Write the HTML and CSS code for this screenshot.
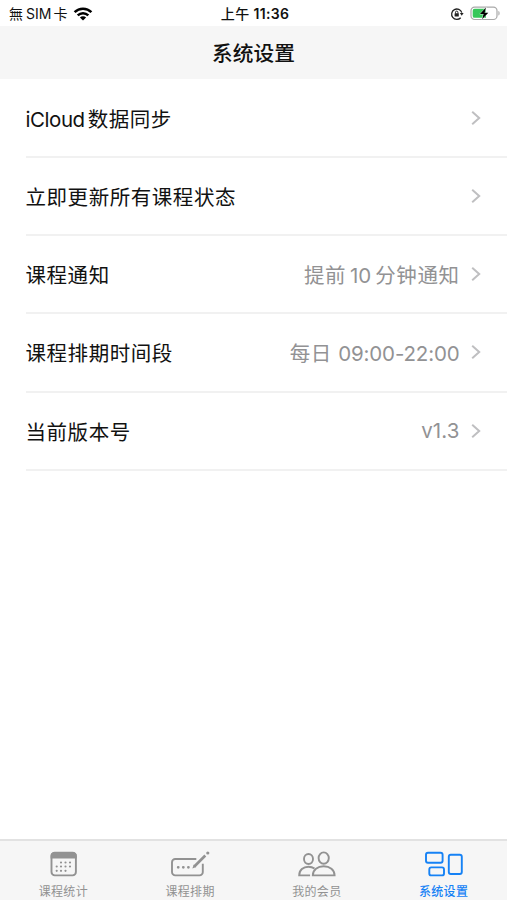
FILE: index.html
```html
<!DOCTYPE html>
<html lang="zh-CN">
<head>
    <meta charset="UTF-8">
    <meta name="viewport" content="width=device-width, initial-scale=1.0">
    <title>系统设置</title>
    <link rel="stylesheet" href="styles.css">
</head>
<body>
    <div class="status-bar">
        <div class="status-left">
            <span class="carrier" lang="zh-TW">無<span class="sim">SIM</span>卡</span>
            <svg class="wifi" width="20" height="14" viewBox="0 0 20 14">
                <path d="M1.6 5.2a12 12 0 0 1 16.8 0M4.7 8.4a7.6 7.6 0 0 1 10.6 0" fill="none" stroke="#000" stroke-width="2.5"/>
                <path d="M10 13.6 6.9 10.6a4.4 4.4 0 0 1 6.2 0z"/>
            </svg>
        </div>
        <div class="status-time">上午 <span class="clock">11:36</span></div>
        <div class="status-right">
            <svg width="14" height="14" viewBox="0 0 14 14">
                <path d="M11.8 5.6A5.2 5.2 0 1 0 10.7 10.7" fill="none" stroke="#222" stroke-width="1.3"/>
                <path d="M9.9 6h3.7l-1.8 2.8z" fill="#222"/>
                <rect x="4.6" y="6.2" width="4.2" height="3.4" rx=".5" fill="#222"/>
                <path d="M5.5 6.6V5.3a1.2 1.2 0 0 1 2.4 0v1.3" fill="none" stroke="#222"/>
            </svg>
            <svg width="31" height="15" viewBox="0 0 31 15">
                <rect x="1" y="1.1" width="26" height="12.4" rx="3.6" fill="#fff" stroke="#a9a9a9" stroke-width="1.2"/>
                <path d="M4.6 2.8H16v9H4.6a1.9 1.9 0 0 1-1.9-1.9V4.7a1.9 1.9 0 0 1 1.9-1.9z" fill="#35c759"/>
                <path d="M28.4 5.1c1.6.5 1.6 4 0 4.5z" fill="#a9a9a9"/>
                <path d="M16 1.6 9.9 8h3.7l-1.5 5.2 6.2-6.5h-3.7z" stroke="#fff" stroke-width=".8" paint-order="stroke"/>
            </svg>
        </div>
    </div>

    <header class="nav-bar">
        <h1>系统设置</h1>
    </header>

    <main class="settings">
        <div class="row">
            <span class="label"><span class="latin">iCloud</span>数据同步</span>
            <svg class="chevron" width="10" height="16" viewBox="0 0 10 16"><path d="M1.2 1.8 8.2 8l-7 6.2"/></svg>
        </div>
        <div class="row">
            <span class="label">立即更新所有课程状态</span>
            <svg class="chevron" width="10" height="16" viewBox="0 0 10 16"><path d="M1.2 1.8 8.2 8l-7 6.2"/></svg>
        </div>
        <div class="row">
            <span class="label">课程通知</span>
            <span class="value">提前<span class="minutes">10</span>分钟通知</span>
            <svg class="chevron" width="10" height="16" viewBox="0 0 10 16"><path d="M1.2 1.8 8.2 8l-7 6.2"/></svg>
        </div>
        <div class="row">
            <span class="label">课程排期时间段</span>
            <span class="value">每日 <span class="hours">09:00-22:00</span></span>
            <svg class="chevron" width="10" height="16" viewBox="0 0 10 16"><path d="M1.2 1.8 8.2 8l-7 6.2"/></svg>
        </div>
        <div class="row">
            <span class="label">当前版本号</span>
            <span class="value version">v1.3</span>
            <svg class="chevron" width="10" height="16" viewBox="0 0 10 16"><path d="M1.2 1.8 8.2 8l-7 6.2"/></svg>
        </div>
    </main>

    <nav class="tab-bar">
        <a class="tab">
            <svg width="40" height="28" viewBox="0 0 40 28">
                <rect x="8.5" y="2.8" width="24.4" height="22.6" rx="3.3"/>
                <path class="solid" d="M7.6 8.5V5.7a3.5 3.5 0 0 1 3.5-3.5h19.1a3.5 3.5 0 0 1 3.5 3.5v2.8z"/>
                <path class="dots" d="M18 12.5h.01M22.5 12.5h.01M27 12.5h.01M13.7 16.5h.01M18 16.5h.01M22.5 16.5h.01M27 16.5h.01M13.7 20.8h.01M18 20.8h.01M22.5 20.8h.01"/>
            </svg>
            <span>课程统计</span>
        </a>
        <a class="tab">
            <svg width="40" height="28" viewBox="0 0 40 28">
                <path d="M26.3 9h-21A3.3 3.3 0 0 0 2 12.3v9.8a3.3 3.3 0 0 0 3.3 3.3h24.2a3.3 3.3 0 0 0 3.3-3.3v-8.3"/>
                <path class="dots large" d="M8.2 17.3h.01M13.3 17.3h.01M18.4 17.3h.01"/>
                <path class="pen" d="M24.3 16.5 35.3 5.5"/>
                <path class="solid" d="m22.3 18.500 1.500-4 2.500 2.500z"/>
                <circle class="solid" cx="37.8" cy="3" r="1.6"/>
            </svg>
            <span>课程排期</span>
        </a>
        <a class="tab">
            <svg width="40" height="28" viewBox="0 0 40 28">
                <ellipse cx="11.5" cy="9" rx="4.5" ry="5"/>
                <ellipse cx="26.7" cy="8.1" rx="5.1" ry="5.7"/>
                <path d="M13.1 25.4H2.2c0-5.3 4-8.7 9.3-8.7 2.4 0 4.400.7 6 1.900"/>
                <path d="M15.8 25.4c0-5.600 4.800-9.100 10.900-9.100s10.900 3.500 10.900 9.100z"/>
            </svg>
            <span>我的会员</span>
        </a>
        <a class="tab active">
            <svg width="40" height="28" viewBox="0 0 40 28">
                <rect x="2" y="2.8" width="16.6" height="10" rx="2"/>
                <rect x="5.3" y="17.4" width="14.7" height="8" rx="2"/>
                <rect x="24.8" y="4.7" width="13" height="19.3" rx="2"/>
            </svg>
            <span>系统设置</span>
        </a>
    </nav>
</body>
</html>
```

FILE: styles.css
```css
* {
    margin: 0;
    padding: 0;
    box-sizing: border-box;
}

body {
    height: 100vh;
    display: flex;
    flex-direction: column;
    overflow: hidden;
    background: #fff;
    color: #111;
    font-family: Inter, "Noto Sans CJK SC", sans-serif;
}

svg {
    display: block;
    flex-shrink: 0;
}

/* Status bar */
.status-bar {
    height: 26px;
    display: grid;
    grid-template-columns: 1fr auto 1fr;
    align-items: center;
    padding: 1px 6px 0 9px;
    font-size: 14px;
    line-height: 20px;
}

.status-left,
.status-right {
    display: flex;
    align-items: center;
}

.status-left {
    gap: 6px;
}

.carrier {
    font-family: Inter, "Noto Sans CJK TC", sans-serif;
    white-space: nowrap;
}

.sim {
    margin: 0 2px 0 3px;
}

.status-time {
    font-weight: 500;
    letter-spacing: 0.3px;
}

.clock {
    font-weight: 600;
}

.status-right {
    justify-content: flex-end;
    gap: 6px;
}

/* Title */
.nav-bar {
    height: 53px;
    display: flex;
    align-items: center;
    justify-content: center;
    padding-bottom: 2px;
    background: #f6f6f6;
}

.nav-bar h1 {
    font-size: 20.7px;
    font-weight: 500;
}

/* Settings list */
.settings {
    flex: 1;
    padding-top: 0.5px;
}

.row {
    height: 78.25px;
    display: flex;
    align-items: center;
    margin-left: 25.5px;
    padding-right: 26.5px;
    border-bottom: 2px solid #f1f1f1;
    font-size: 20.5px;
    letter-spacing: 0.55px;
    white-space: nowrap;
}

.label {
    flex: 1;
}

.latin {
    margin-right: 3px;
    letter-spacing: -0.45px;
}

.value {
    margin-right: 11px;
    color: #929294;
}

.minutes {
    margin: 0 4px;
    letter-spacing: 0;
}

.hours {
    letter-spacing: -0.15px;
}

.version {
    letter-spacing: 0.1px;
}

.chevron path {
    fill: none;
    stroke: #bfbfc1;
    stroke-width: 2;
}

/* Tab bar */
.tab-bar {
    height: 61px;
    display: flex;
    background: #f6f6f6;
    border-top: 2px solid #e2e2e2;
}

.tab {
    flex: 1;
    display: flex;
    flex-direction: column;
    align-items: center;
    padding-top: 9px;
    color: #929292;
    font-size: 12px;
    line-height: 18px;
    letter-spacing: 0.3px;
}

.tab span {
    margin-top: 5px;
}

.tab svg {
    fill: none;
    stroke: currentColor;
    stroke-width: 1.9;
}

.tab .solid {
    fill: currentColor;
    stroke: none;
}

.tab .dots {
    stroke-width: 2.2;
    stroke-linecap: round;
}

.tab .large {
    stroke-width: 2.8;
}

.tab .pen {
    stroke-width: 2.6;
}

.active {
    color: #1682f5;
    font-weight: 500;
}
```
